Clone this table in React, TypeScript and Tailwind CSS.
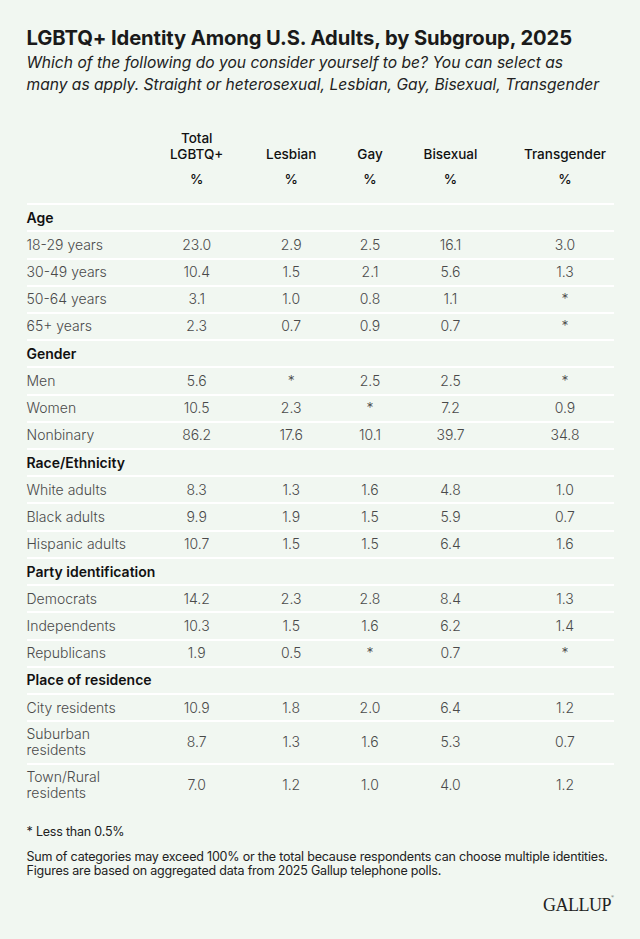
import React from "react";

type Row = { label: string; vals: string[]; two?: boolean } | { section: string };

const rows: Row[] = [
  { section: "Age" },
  { label: "18-29 years", vals: ["23.0", "2.9", "2.5", "16.1", "3.0"] },
  { label: "30-49 years", vals: ["10.4", "1.5", "2.1", "5.6", "1.3"] },
  { label: "50-64 years", vals: ["3.1", "1.0", "0.8", "1.1", "*"] },
  { label: "65+ years", vals: ["2.3", "0.7", "0.9", "0.7", "*"] },
  { section: "Gender" },
  { label: "Men", vals: ["5.6", "*", "2.5", "2.5", "*"] },
  { label: "Women", vals: ["10.5", "2.3", "*", "7.2", "0.9"] },
  { label: "Nonbinary", vals: ["86.2", "17.6", "10.1", "39.7", "34.8"] },
  { section: "Race/Ethnicity" },
  { label: "White adults", vals: ["8.3", "1.3", "1.6", "4.8", "1.0"] },
  { label: "Black adults", vals: ["9.9", "1.9", "1.5", "5.9", "0.7"] },
  { label: "Hispanic adults", vals: ["10.7", "1.5", "1.5", "6.4", "1.6"] },
  { section: "Party identification" },
  { label: "Democrats", vals: ["14.2", "2.3", "2.8", "8.4", "1.3"] },
  { label: "Independents", vals: ["10.3", "1.5", "1.6", "6.2", "1.4"] },
  { label: "Republicans", vals: ["1.9", "0.5", "*", "0.7", "*"] },
  { section: "Place of residence" },
  { label: "City residents", vals: ["10.9", "1.8", "2.0", "6.4", "1.2"] },
  { label: "Suburban residents", vals: ["8.7", "1.3", "1.6", "5.3", "0.7"], two: true },
  { label: "Town/Rural residents", vals: ["7.0", "1.2", "1.0", "4.0", "1.2"], two: true },
];

const grid = "grid grid-cols-[123px_94.4px_94.6px_63px_98px_1fr] items-center";

export default function App() {
  return (
    <div
      className="w-[640px] h-[939px] bg-[#f1f7f1] px-[26.5px] pt-[26px] text-[#1a1a1a]"
      style={{ fontFamily: "Inter, 'Liberation Sans', sans-serif" }}
    >
      <h1 className="text-[20.2px] font-bold leading-[24px] tracking-[-0.1px]">
        LGBTQ+ Identity Among U.S. Adults, by Subgroup, 2025
      </h1>
      <p className="mt-[2px] text-[15.6px] italic leading-[22px] text-[#222]">
        Which of the following do you consider yourself to be? You can select as
        <br />
        many as apply. Straight or heterosexual, Lesbian, Gay, Bisexual, Transgender
      </p>

      <div className="mt-[26px] text-[13.5px] font-medium leading-[16px] text-[#111]">
        <div className={`${grid} items-end h-[40px]`}>
          <div />
          <div className="text-center">Total<br />LGBTQ+</div>
          <div className="text-center">Lesbian</div>
          <div className="text-center">Gay</div>
          <div className="text-center">Bisexual</div>
          <div className="pl-[17px] text-center">Transgender</div>
        </div>
        <div className={`${grid} h-[41px] pb-[8px]`}>
          <div />
          <div className="text-center">%</div>
          <div className="text-center">%</div>
          <div className="text-center">%</div>
          <div className="text-center">%</div>
          <div className="pl-[17px] text-center">%</div>
        </div>
      </div>

      <div className="text-[14px] leading-[16px]">
        {rows.map((r, i) =>
          "section" in r ? (
            <div
              key={i}
              className="h-[27.33px] border-t-2 border-white flex items-center font-semibold text-[#111]"
            >
              {r.section}
            </div>
          ) : (
            <div
              key={i}
              className={`${grid} ${r.two ? "h-[42.3px]" : "h-[27.2px]"} border-t-2 border-white font-light text-[#4a4a4a]`}
            >
              <div className={r.two ? "w-[90px]" : ""}>{r.label}</div>
              {r.vals.map((v, j) => (
                <div key={j} className={j === 4 ? "pl-[17px] text-center" : "text-center"}>
                  {v}
                </div>
              ))}
            </div>
          )
        )}
      </div>

      <div className="mt-[20px] text-[12.5px] leading-[14px] text-[#222] tracking-[-0.2px]">
        <p>* Less than 0.5%</p>
        <p className="mt-[11px]">
          Sum of categories may exceed 100% or the total because respondents can choose multiple identities.
          <br />
          Figures are based on aggregated data from 2025 Gallup telephone polls.
        </p>
      </div>

      <div className="mt-[17px] flex justify-end">
        <span
          className="text-[18px] leading-[20px] text-[#222] tracking-[-0.5px]"
          style={{ fontFamily: "'Liberation Serif', serif" }}
        >
          GALLUP<sup className="text-[4px] align-top relative top-[2px]">®</sup>
        </span>
      </div>
    </div>
  );
}
